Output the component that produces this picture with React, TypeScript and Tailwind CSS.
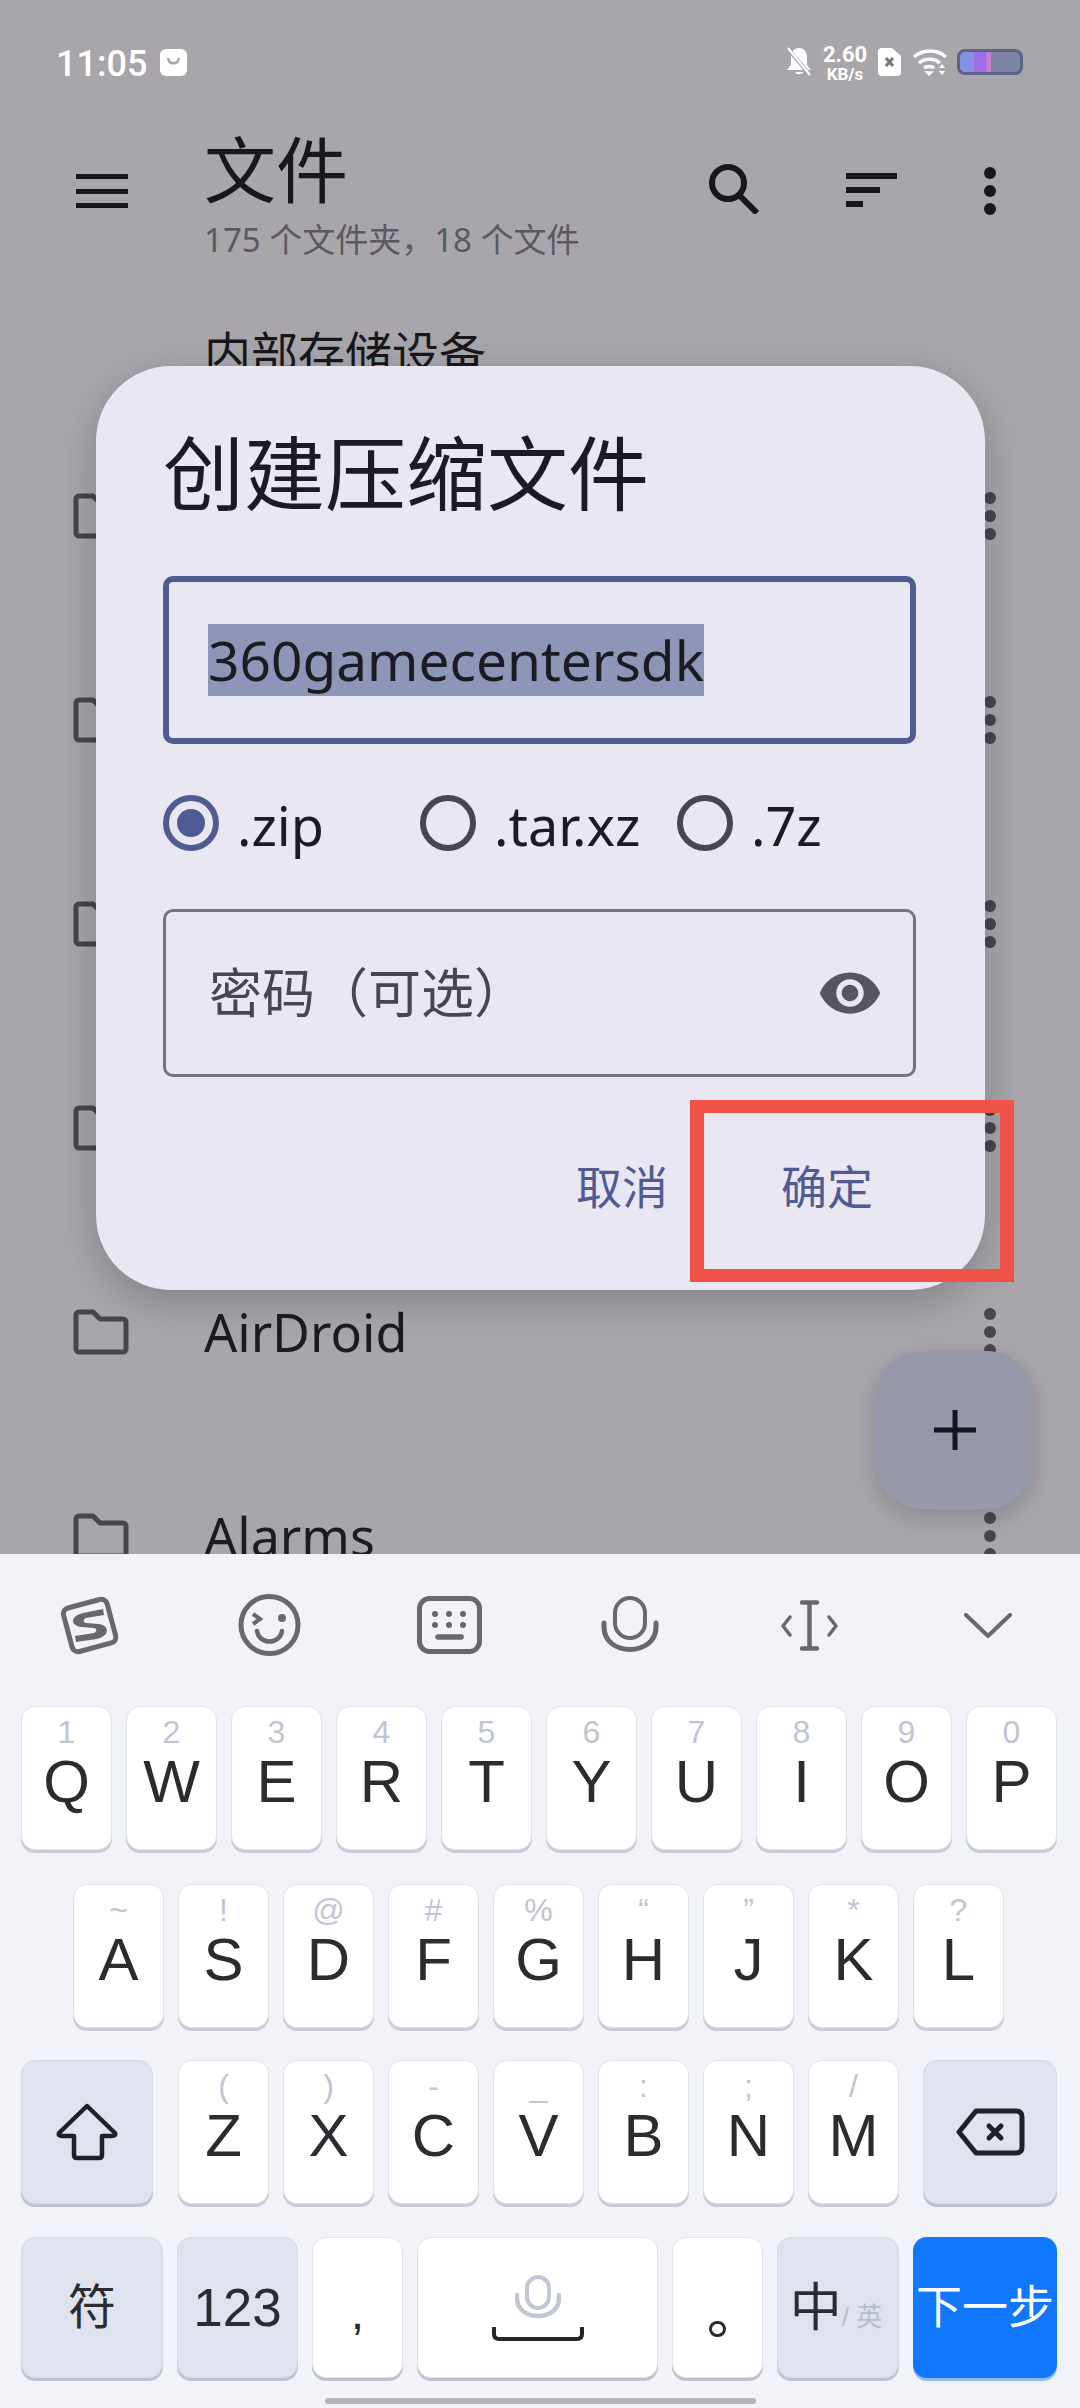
import React from "react";

const FONT = "font-['Noto_Sans','Noto_Sans_CJK_SC',sans-serif]";
const KEY_FONT = "font-['Liberation_Sans','Noto_Sans_CJK_SC',sans-serif]";
const ICON = "#68686e";

const Folder = () => (
  <svg width="56" height="46" viewBox="0 0 56 46" fill="none" stroke="#47464e" strokeWidth="5" strokeLinejoin="round">
    <path d="M3 6a3 3 0 0 1 3-3h14l7 7h23a3 3 0 0 1 3 3v27a3 3 0 0 1-3 3H6a3 3 0 0 1-3-3z" />
  </svg>
);

const Dots = ({ color = "bg-[#47464e]" }: { color?: string }) => (
  <div className="flex flex-col gap-[6px]">
    <span className={`w-[12px] h-[12px] rounded-full ${color}`} />
    <span className={`w-[12px] h-[12px] rounded-full ${color}`} />
    <span className={`w-[12px] h-[12px] rounded-full ${color}`} />
  </div>
);

const Row = ({ name }: { name?: string }) => (
  <div className="h-[204px] shrink-0 flex items-center pl-[73px] pr-[84px]">
    <Folder />
    <span className="ml-[75px] flex-1 text-[52px] leading-[60px] text-[#1b1b20]">{name}</span>
    <Dots />
  </div>
);

const StatusBar = () => (
  <div className="h-[124px] flex items-center pl-[56px] pr-[57px] text-white">
    <span className="mt-[4px] text-[36px] font-medium font-['Roboto',sans-serif] w-[104px]">11:05</span>
    <svg width="27" height="27" viewBox="0 0 27 27">
      <rect width="27" height="27" rx="6" fill="#fff" />
      <path d="M8 9c1 7 10 7 11 0" stroke="#a8a6ab" strokeWidth="2.5" fill="none" />
    </svg>
    <div className="flex-1" />
    <svg width="24" height="30" viewBox="0 0 24 30">
      <path d="M12 1c-5 0-8 4-8 9v8l-4 5h24l-4-5v-8c0-5-3-9-8-9zM8 25c1 3 7 3 8 0z" fill="#fff" />
      <path d="M1 2l23 27" stroke="#a8a6ab" strokeWidth="4" />
      <path d="M1 1l22 27" stroke="#fff" strokeWidth="2" />
    </svg>
    <div className="ml-[12px] mt-[4px] w-[44px] flex flex-col items-center font-bold font-['Roboto',sans-serif]">
      <span className="text-[22px] leading-[20px]">2.60</span>
      <span className="text-[17px] leading-[18px]">KB/s</span>
    </div>
    <svg className="ml-[11px]" width="23" height="28" viewBox="0 0 23 28">
      <path d="M4 0h10l9 8v16a4 4 0 0 1-4 4H4a4 4 0 0 1-4-4V4a4 4 0 0 1 4-4z" fill="#fff" />
      <path d="M8 10l7 8M15 10l-7 8" stroke="#77767c" strokeWidth="3" />
    </svg>
    <svg className="ml-[12px]" width="34" height="27" viewBox="0 0 34 27" fill="none" stroke="#fff" strokeWidth="3.5">
      <path d="M1 8c9-8 23-8 32 0" />
      <path d="M6 14c6-5 15-5 21 0" />
      <path d="M11 19c3-2 8-2 10 0" />
      <path d="M13 23l3 3 3-3z" fill="#fff" strokeWidth="1.5" />
      <path d="M29 15l-3 4h6zM29 26l-3-4h6z" fill="#fff" stroke="none" />
    </svg>
    <div className="ml-[10px] w-[66px] h-[26px] rounded-[8px] border-[3px] border-[#5e6385] bg-[#7d84a5] overflow-hidden flex">
      <span className="w-[8px] bg-[#8093e6]" />
      <span className="w-[6px] bg-[#8a8fe0]" />
      <span className="w-[12px] bg-[#9a6fe9]" />
      <span className="w-[5px] bg-[#c57fd0]" />
    </div>
  </div>
);

const Header = () => (
  <div className="h-[176px] flex pl-[76px] pr-[84px]">
    <div className="w-[52px] mt-[50px] h-[34px] flex flex-col justify-between">
      <span className="h-[5px] bg-[#17171c]" />
      <span className="h-[5px] bg-[#17171c]" />
      <span className="h-[5px] bg-[#17171c]" />
    </div>
    <div className="ml-[76px] flex-1">
      <div className="text-[72px] leading-[90px] text-[#17171c]">文件</div>
      <div className="text-[33px] leading-[40px] mt-[6px] text-[#5a5960]">175 个文件夹，18 个文件</div>
    </div>
    <svg className="mt-[40px]" width="50" height="50" viewBox="0 0 50 50" fill="none" stroke="#17171c">
      <circle cx="19" cy="19" r="16" strokeWidth="6" />
      <path d="M30 31l18 18" strokeWidth="6" />
    </svg>
    <div className="ml-[87px] mt-[49px] w-[51px] h-[34px] flex flex-col justify-between">
      <span className="h-[6px] w-[51px] bg-[#17171c]" />
      <span className="h-[6px] w-[34px] bg-[#17171c]" />
      <span className="h-[6px] w-[17px] bg-[#17171c]" />
    </div>
    <div className="ml-[87px] mt-[43px]">
      <Dots color="bg-[#17171c]" />
    </div>
  </div>
);

const Radio = ({ label, on, width }: { label: string; on?: boolean; width: string }) => (
  <div className={`flex items-center ${width}`}>
    <span
      className={`w-[56px] h-[56px] shrink-0 rounded-full border-[6px] flex items-center justify-center ${
        on ? "border-[#4f5b92]" : "border-[#46464f]"
      }`}
    >
      {on && <span className="w-[28px] h-[28px] rounded-full bg-[#4f5b92]" />}
    </span>
    <span className="ml-[18px] mt-[3px] text-[54px] leading-[60px] text-[#1b1b23]">{label}</span>
  </div>
);

const Dialog = () => (
  <div className="absolute left-[96px] top-[366px] w-[889px] h-[924px] rounded-[75px] bg-[#e9e8f2] shadow-[0_12px_40px_rgba(0,0,0,0.22)] pl-[67px] pr-[69px] pt-[57px]">
    <div className="text-[81px] leading-[100px] text-[#1b1b23]">创建压缩文件</div>
    <div className="mt-[53px] h-[168px] rounded-[10px] border-[6px] border-[#4f5b92] flex items-center pl-[39px]">
      <span className="h-[72px] bg-[#8e96b8] text-[55px] leading-[72px] text-[#1b1b23]">360gamecentersdk</span>
    </div>
    <div className="mt-[51px] h-[56px] flex items-center">
      <Radio label=".zip" on width="w-[257px]" />
      <Radio label=".tar.xz" width="w-[257px]" />
      <Radio label=".7z" width="w-[200px]" />
    </div>
    <div className="mt-[58px] h-[168px] rounded-[10px] border-[3px] border-[#74747f] flex items-center justify-between pl-[43px] pr-[30px]">
      <span className="text-[53px] leading-[60px] text-[#46464f]">密码（可选）</span>
      <svg width="66" height="66" viewBox="0 0 24 24" fill="#55555e">
        <path d="M12 4.5C7 4.5 2.73 7.61 1 12c1.73 4.39 6 7.5 11 7.5s9.27-3.11 11-7.5c-1.73-4.39-6-7.5-11-7.5zM12 17c-2.76 0-5-2.24-5-5s2.24-5 5-5 5 2.24 5 5-2.24 5-5 5zm0-8c-1.66 0-3 1.34-3 3s1.34 3 3 3 3-1.34 3-3-1.34-3-3-3z" />
      </svg>
    </div>
    <div className="mt-[59px] h-[100px] flex items-center justify-end gap-[113px] pr-[43px] text-[46px] leading-[60px] text-[#4f5b92]">
      <span>取消</span>
      <span>确定</span>
    </div>
  </div>
);

const Key = ({ hint, label, width = "w-[91px]" }: { hint: string; label: string; width?: string }) => (
  <div className={`${width} h-[144px] shrink-0 rounded-[14px] bg-white border border-[#e2e4ec] shadow-[0_3px_0_#c8ccd9] flex flex-col items-center pt-[7px]`}>
    <span className="h-[36px] text-[32px] leading-[36px] text-[#c0c4d4]">{hint}</span>
    <span className="text-[60px] leading-[64px] text-[#2b2c30]">{label}</span>
  </div>
);

const keyBox = "h-[141px] shrink-0 rounded-[14px] border flex items-center justify-center shadow-[0_3px_0_#bfc3d1]";
const fnKey = "bg-[#dfe3ee] border-[#d5d9e5]";
const plainKey = "bg-white border-[#e2e4ec]";

const KeyRow = ({ keys, hints }: { keys: string; hints: string[] }) => (
  <>
    {keys.split("").map((k, i) => (
      <Key key={k} label={k} hint={hints[i]} />
    ))}
  </>
);

const Toolbar = () => (
  <div className="h-[152px] pb-[10px] flex items-center pl-[56px]">
    <svg width="67" height="66" viewBox="0 0 67 66" fill="none" stroke={ICON}>
      <rect x="11" y="11" width="45" height="45" rx="6" strokeWidth="5" transform="rotate(-15 33.5 33)" />
      <path
        d="M47 17L27 21C14 24 14 34 26 35L38 36C41 36 41 40 38 41L19 44L20 50L41 47C54 44 54 33 42 32L30 31C27 31 27 27 30 26L48 23Z"
        fill={ICON}
        stroke="none"
      />
    </svg>
    <svg className="ml-[115px]" width="63" height="64" viewBox="0 0 63 64" fill="none" stroke={ICON}>
      <circle cx="31.5" cy="32" r="28.5" strokeWidth="5" />
      <path d="M15 21l7 5-7 5" strokeWidth="4" />
      <circle cx="44" cy="25" r="4" fill={ICON} stroke="none" />
      <path d="M19 38c2 14 23 14 25 0" strokeWidth="4.5" strokeLinecap="round" />
    </svg>
    <svg className="ml-[116px]" width="65" height="58" viewBox="0 0 65 58" fill="none" stroke={ICON}>
      <rect x="2.5" y="2.5" width="60" height="53" rx="10" strokeWidth="5" />
      <g fill={ICON} stroke="none">
        <circle cx="18" cy="18" r="3" />
        <circle cx="32" cy="18" r="3" />
        <circle cx="46" cy="18" r="3" />
        <circle cx="18" cy="29" r="3" />
        <circle cx="32" cy="29" r="3" />
        <circle cx="46" cy="29" r="3" />
      </g>
      <path d="M21 41h23" strokeWidth="5.5" strokeLinecap="round" />
    </svg>
    <svg className="ml-[119px]" width="58" height="58" viewBox="0 0 58 58" fill="none" stroke={ICON}>
      <rect x="14" y="2" width="30" height="40" rx="15" strokeWidth="4" />
      <path d="M3 27v4c0 30 52 30 52 0v-4" strokeWidth="5" strokeLinecap="round" />
    </svg>
    <svg className="ml-[121px]" width="59" height="51" viewBox="0 0 59 51" fill="none" stroke={ICON} strokeLinecap="round" strokeLinejoin="round">
      <path d="M22 2.5h15M22 48.5h15M29.5 2.5v46" strokeWidth="4.5" />
      <path d="M10 17l-7 9 7 9M49 17l7 9-7 9" strokeWidth="3.5" />
    </svg>
    <svg className="ml-[125px]" width="48" height="25" viewBox="0 0 48 25" fill="none" stroke={ICON} strokeLinecap="round" strokeLinejoin="round">
      <path d="M2 2l22 21L46 2" strokeWidth="4" />
    </svg>
  </div>
);

const Keyboard = () => (
  <div className={`h-[854px] shrink-0 bg-[#f2f3f8] ${KEY_FONT}`}>
    <Toolbar />
    <div className="flex gap-[14px] pl-[21px]">
      <KeyRow keys="QWERTYUIOP" hints={["1", "2", "3", "4", "5", "6", "7", "8", "9", "0"]} />
    </div>
    <div className="mt-[34px] flex gap-[14px] pl-[73px]">
      <KeyRow keys="ASDFGHJKL" hints={["~", "!", "@", "#", "%", "“", "”", "*", "?"]} />
    </div>
    <div className="mt-[32px] flex gap-[14px] pl-[21px]">
      <div className={`w-[132px] h-[144px] shrink-0 rounded-[14px] border flex items-center justify-center shadow-[0_3px_0_#bfc3d1] ${fnKey}`}>
        <svg width="62" height="58" viewBox="0 0 62 58" fill="none" stroke="#1f2126" strokeWidth="4.5" strokeLinejoin="round">
          <path d="M31 3L59 30Q60 33 56 33H46V52Q46 55 43 55H21Q18 55 18 52V33H6Q2 33 3 30Z" />
        </svg>
      </div>
      <div className="flex gap-[14px] ml-[11px]">
        <KeyRow keys="ZXCVBNM" hints={["(", ")", "-", "_", ":", ";", "/"]} />
      </div>
      <div className={`w-[134px] h-[144px] shrink-0 ml-[10px] rounded-[14px] border flex items-center justify-center shadow-[0_3px_0_#bfc3d1] ${fnKey}`}>
        <svg width="69" height="48" viewBox="0 0 69 48" fill="none" stroke="#1f2126" strokeLinejoin="round" strokeLinecap="round">
          <path d="M20 3H60Q66 3 66 9V39Q66 45 60 45H20L3 24Z" strokeWidth="5" />
          <path d="M33 18l12 12M45 18L33 30" strokeWidth="5" />
        </svg>
      </div>
    </div>
    <div className="mt-[33px] flex gap-[14px] pl-[21px]">
      <div className={`${keyBox} ${fnKey} w-[142px] text-[48px] text-[#2b2c30]`}>符</div>
      <div className={`${keyBox} ${fnKey} w-[121px] text-[53px] text-[#2b2c30]`}>123</div>
      <div className={`${keyBox} ${plainKey} w-[91px] text-[48px] text-[#2b2c30] pt-[10px]`}>,</div>
      <div className={`${keyBox} ${plainKey} w-[241px] flex-col gap-[7px]`}>
        <svg width="46" height="45" viewBox="0 0 46 45" fill="none" stroke="#c2c6d6">
          <rect x="12" y="2" width="22" height="31" rx="11" strokeWidth="4" />
          <path d="M2 20v3c0 24 42 24 42 0v-3" strokeWidth="4.5" strokeLinecap="round" />
        </svg>
        <svg width="92" height="14" viewBox="0 0 92 14" fill="none" stroke="#24262b" strokeWidth="4" strokeLinecap="round">
          <path d="M2 1v6q0 5 5 5h78q5 0 5-5V1" />
        </svg>
      </div>
      <div className={`${keyBox} ${plainKey} w-[91px] items-end pb-[40px]`}>
        <span className="w-[17px] h-[16px] rounded-full border-[3px] border-[#2b2c30]" />
      </div>
      <div className={`${keyBox} ${fnKey} w-[122px] items-center pr-[4px]`}>
        <span className="text-[52px] leading-[60px] text-[#2b2c30]">中</span>
        <span className="text-[26px] leading-[30px] text-[#b6bbcd] mt-[18px]">/ 英</span>
      </div>
      <div className="h-[141px] w-[144px] shrink-0 rounded-[14px] bg-[#1277ff] flex items-center justify-center text-[46px] text-white shadow-[0_3px_0_#8fbcf5]">
        下一步
      </div>
    </div>
    <div className="mt-[20px] mx-auto w-[431px] h-[6px] rounded-full bg-[#b4b4b8]" />
  </div>
);

export default function App() {
  return (
    <div className={`relative w-[1080px] h-[2408px] overflow-hidden flex flex-col ${FONT}`}>
      <div className="h-[1554px] shrink-0 overflow-hidden bg-[#a8a6ab]">
        <StatusBar />
        <Header />
        <div className="h-[114px] pl-[204px] pt-[23px] text-[47px] leading-[60px] text-[#17171c]">内部存储设备</div>
        <Row />
        <Row />
        <Row />
        <Row />
        <Row name="AirDroid" />
        <Row name="Alarms" />
      </div>
      <Keyboard />
      {/* fab */}
      <div className="absolute left-[876px] top-[1351px] w-[157px] h-[158px] rounded-[46px] bg-[#9799aa] shadow-[0_8px_24px_rgba(0,0,0,0.18)] flex items-center justify-center">
        <svg width="42" height="40" viewBox="0 0 42 40" stroke="#14141f" strokeWidth="5">
          <path d="M0 20h42M21 0v40" />
        </svg>
      </div>
      <Dialog />
      {/* annotation */}
      <div className="absolute left-[690px] top-[1100px] w-[324px] h-[182px] border-x-[14px] border-y-[13px] border-[#f0524a]" />
    </div>
  );
}
